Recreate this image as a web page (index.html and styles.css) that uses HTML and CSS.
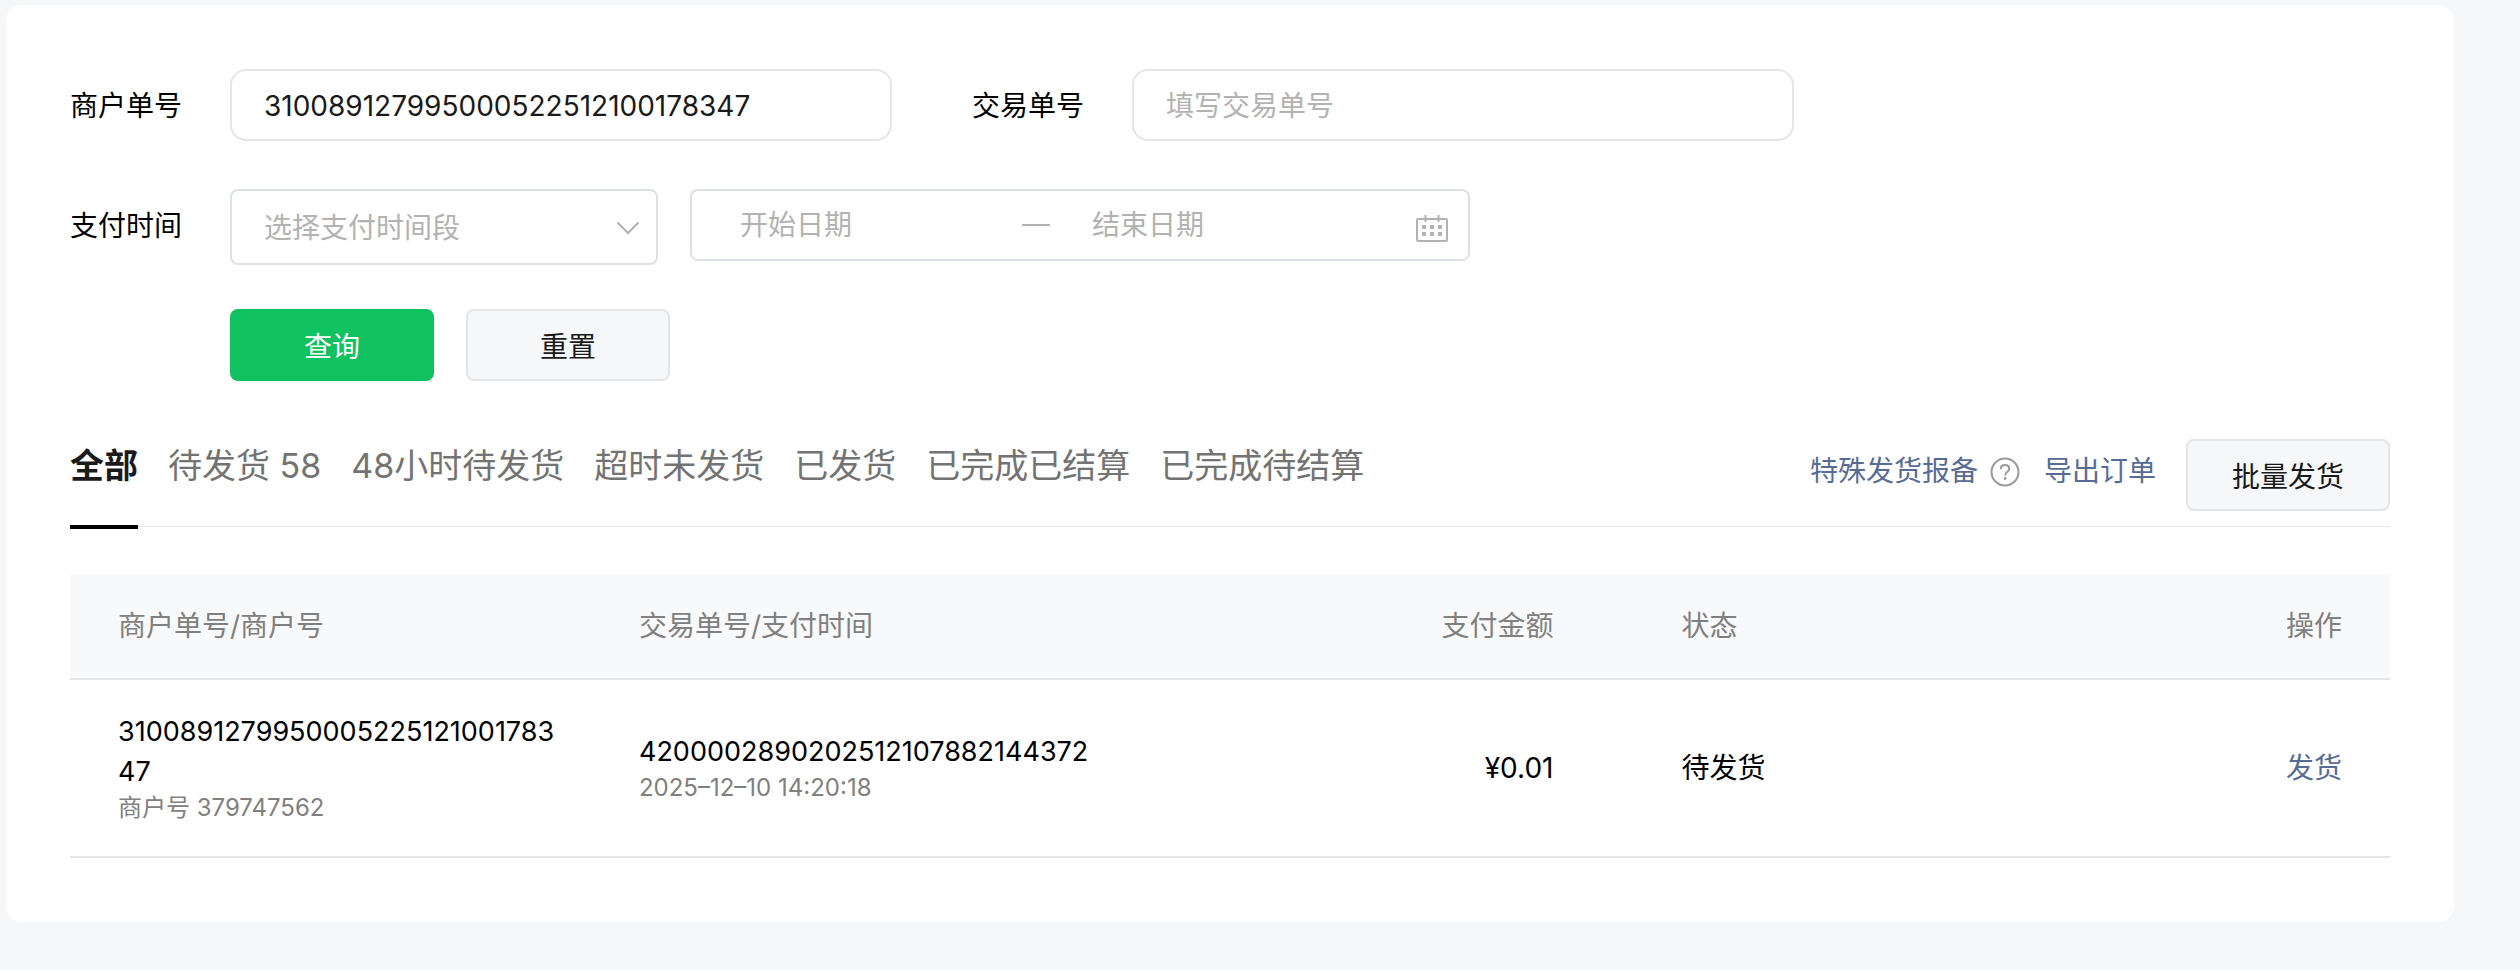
FILE: index.html
```
<!DOCTYPE html>
<html lang="zh-CN">
<head>
    <meta charset="UTF-8">
    <meta name="viewport" content="width=device-width, initial-scale=1.0">
    <title>发货管理</title>
    <link rel="stylesheet" href="styles.css">
</head>
<body>
    <main class="card">
        <form class="search-form">
            <div class="form-row">
                <div class="field">
                    <label for="merchantNo">商户单号</label>
                    <input class="text-input" type="text" id="merchantNo" value="310089127995000522512100178347">
                </div>
                <div class="field">
                    <label for="tradeNo">交易单号</label>
                    <input class="text-input" type="text" id="tradeNo" placeholder="填写交易单号">
                </div>
            </div>

            <div class="form-row form-row-time">
                <div class="field">
                    <label for="payTime">支付时间</label>
                    <div class="select-box">
                        <select id="payTime">
                            <option>选择支付时间段</option>
                        </select>
                        <svg class="arrow" width="24" height="14" viewBox="0 0 24 14" fill="none" stroke="#b2b2b2" stroke-width="2">
                            <path d="M1.5 1.5 12 12 22.5 1.5"/>
                        </svg>
                    </div>
                </div>
                <div class="date-range">
                    <input class="date-start" type="text" aria-label="开始日期" placeholder="开始日期">
                    <span class="date-dash"></span>
                    <input class="date-end" type="text" aria-label="结束日期" placeholder="结束日期">
                    <svg class="calendar" width="32" height="28" viewBox="0 0 32 28">
                        <rect x="1" y="4" width="30" height="22" rx="1" fill="none" stroke="#b2b2b2" stroke-width="2"/>
                        <path d="M9.5 0v7M22.5 0v7" stroke="#b2b2b2" stroke-width="2"/>
                        <path d="M6 12h4M14 12h4M22 12h4M6 19h4M14 19h4M22 19h4" stroke="#b2b2b2" stroke-width="4"/>
                    </svg>
                </div>
            </div>

            <div class="form-actions">
                <button class="btn btn-primary" type="submit">查询</button>
                <button class="btn" type="reset">重置</button>
            </div>
        </form>

        <div class="toolbar">
            <nav class="tabs">
                <a class="tab active" href="#">全部</a>
                <a class="tab" href="#">待发货 58</a>
                <a class="tab" href="#">48小时待发货</a>
                <a class="tab" href="#">超时未发货</a>
                <a class="tab" href="#">已发货</a>
                <a class="tab" href="#">已完成已结算</a>
                <a class="tab" href="#">已完成待结算</a>
            </nav>
            <div class="tools">
                <a class="link" href="#">特殊发货报备</a>
                <svg class="help" width="30" height="30" viewBox="0 0 30 30" fill="none" stroke="#9a9a9a" stroke-width="2">
                    <circle cx="15" cy="15" r="13.5"/>
                    <path d="M10.8 12.2c0-2.5 1.7-4.2 4.2-4.2s4.2 1.6 4.2 3.8c0 3.2-4.1 3.3-4.1 6.6"/>
                    <circle cx="15.1" cy="21.5" r="1.4" fill="#9a9a9a" stroke="none"/>
                </svg>
                <a class="link" href="#">导出订单</a>
                <button class="btn btn-batch" type="button">批量发货</button>
            </div>
        </div>

        <table class="order-table">
            <thead>
                <tr>
                    <th class="col-merchant">商户单号/商户号</th>
                    <th class="col-trade">交易单号/支付时间</th>
                    <th class="col-amount">支付金额</th>
                    <th class="col-status">状态</th>
                    <th class="col-action">操作</th>
                </tr>
            </thead>
            <tbody>
                <tr>
                    <td class="col-merchant">
                        <div class="number">310089127995000522512100178347</div>
                        <div class="sub">商户号 379747562</div>
                    </td>
                    <td class="col-trade">
                        <div class="number">4200002890202512107882144372</div>
                        <div class="sub">2025–12–10 14:20:18</div>
                    </td>
                    <td class="col-amount">¥0.01</td>
                    <td class="col-status">待发货</td>
                    <td class="col-action"><a class="link" href="#">发货</a></td>
                </tr>
            </tbody>
        </table>
    </main>
</body>
</html>
```
FILE: styles.css
```
* {
    box-sizing: border-box;
}
body {
    margin: 0;
    padding: 5px 66px 48px 6px;
    background-color: #f6f7f9;
    color: #000;
    font-family: Inter, "Noto Sans CJK SC", sans-serif;
    font-size: 28px;
    line-height: 40px;
}
input, select, button {
    font-family: inherit;
    font-size: 28px;
    color: #1a1a1a;
}
a {
    text-decoration: none;
}
.card {
    padding: 64px;
    background-color: #fff;
    border-radius: 16px;
}

/* Search form */
.form-row {
    display: flex;
    gap: 80px;
    margin-bottom: 48px;
}
.form-row-time {
    gap: 32px;
    margin-bottom: 44px;
}
.field {
    display: flex;
    gap: 48px;
}
.field label {
    line-height: 74px;
    height: 72px;
    white-space: nowrap;
}
.text-input {
    width: 662px;
    height: 72px;
    padding: 2px 32px 0;
    border: 2px solid #e4e5e7;
    border-radius: 16px;
    background-color: #fff;
}
::placeholder {
    color: #b2b2b2;
    opacity: 1;
}
.select-box {
    position: relative;
    width: 428px;
}
.select-box select {
    width: 100%;
    height: 76px;
    padding: 2px 32px 0;
    border: 2px solid #dde1e6;
    border-radius: 8px;
    background-color: #fff;
    color: #b2b2b2;
    appearance: none;
}
.arrow {
    position: absolute;
    right: 18px;
    top: 32px;
}
.date-range {
    display: flex;
    align-items: center;
    width: 780px;
    height: 72px;
    padding: 0 20px 0 48px;
    border: 2px solid #dde1e6;
    border-radius: 8px;
}
.date-range input {
    height: 68px;
    padding: 0;
    border: none;
    background: none;
}
.date-start {
    width: 282px;
}
.date-dash {
    width: 28px;
    height: 2px;
    margin-right: 42px;
    background-color: #b2b2b2;
}
.date-end {
    flex: 1;
    min-width: 0;
}
.calendar {
    margin-top: 8px;
}
.form-actions {
    display: flex;
    gap: 32px;
    padding-left: 160px;
}
.btn {
    width: 204px;
    height: 72px;
    padding: 0;
    border: 2px solid #e4e5e7;
    border-radius: 8px;
    background-color: #f6f7f9;
    cursor: pointer;
}
.btn-primary {
    border-color: #10c160;
    background-color: #10c160;
    color: #fff;
}

/* Tabs */
.toolbar {
    display: flex;
    justify-content: space-between;
    margin-top: 58px;
    border-bottom: 1px solid #e4e5e7;
}
.tabs {
    display: flex;
    gap: 30px;
    margin-bottom: -3px;
}
.tab {
    padding: 3px 0 35px;
    border-bottom: 4px solid transparent;
    color: #737373;
    font-size: 34px;
    line-height: 48px;
    white-space: nowrap;
}
.tab.active {
    border-bottom-color: #000;
    color: #1a1a1a;
    font-weight: bold;
}
.tools {
    display: flex;
    line-height: 64px;
    white-space: nowrap;
}
.link {
    color: #576b95;
}
.help {
    margin: 18px 24px 0 12px;
}
.btn-batch {
    margin-left: 30px;
}

/* Order list */
.order-table {
    width: 100%;
    margin-top: 47px;
    border-collapse: separate;
    border-spacing: 0;
    table-layout: fixed;
}
.order-table th, .order-table td {
    padding: 32px 40px;
    border-bottom: 2px solid #e4e5e7;
    text-align: left;
    word-break: break-all;
}
.order-table th {
    background-color: #f8f9fb;
    color: #808080;
    font-weight: normal;
}
.order-table .col-merchant {
    width: 22.8%;
    padding-left: 48px;
}
.order-table .col-trade {
    width: 26%;
}
.order-table .col-amount {
    padding-right: 64px;
    text-align: right;
}
.order-table .col-status {
    width: 22.3%;
    padding-left: 64px;
}
.order-table .col-action {
    width: 11%;
    padding-right: 48px;
    text-align: right;
}
.number {
    font-size: 27px;
}
.sub {
    color: #808080;
    font-size: 24px;
    line-height: 32px;
}
```
